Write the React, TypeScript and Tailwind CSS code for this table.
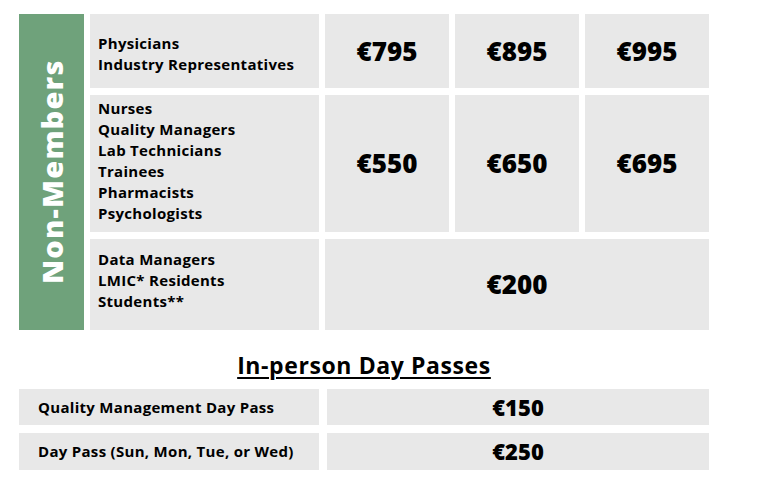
import React from "react";

const font = { fontFamily: '"Open Sans", "Liberation Sans", sans-serif' };

function Label({ lines, cls }: { lines: string[]; cls: string }) {
  return (
    <div
      className={
        "bg-[#e8e8e8] flex flex-col justify-center pl-[8px] text-[15px] leading-[21px] tracking-[0.3px] font-bold text-black " +
        cls
      }
    >
      {lines.map((l) => (
        <div key={l}>{l}</div>
      ))}
    </div>
  );
}

function Price({ v, span }: { v: string; span?: boolean }) {
  return (
    <div
      className={
        "bg-[#e8e8e8] flex items-center justify-center text-[26px] font-extrabold text-black tracking-[0px] " +
        (span ? "col-span-3" : "")
      }
    >
      {v}
    </div>
  );
}

export default function App() {
  return (
    <div className="w-[780px] h-[500px] bg-white pt-[14px] pl-[19px]" style={font}>
      <div className="w-[690px]">
        <div className="grid grid-cols-[65px_229px_124px_124px_124px] grid-rows-[74px_137px_91px] gap-x-[6px] gap-y-[7px]">
          <div className="row-span-3 bg-[#6fa27b] flex items-center justify-center overflow-hidden">
            <div className="-rotate-90 whitespace-nowrap text-white font-extrabold text-[29px] tracking-[1.2px]">
              Non-Members
            </div>
          </div>
          <Label cls="pt-[6px]" lines={["Physicians", "Industry Representatives"]} />
          <Price v="€795" />
          <Price v="€895" />
          <Price v="€995" />
          <Label
            cls="pb-[6px]"
            lines={[
              "Nurses",
              "Quality Managers",
              "Lab Technicians",
              "Trainees",
              "Pharmacists",
              "Psychologists",
            ]}
          />
          <Price v="€550" />
          <Price v="€650" />
          <Price v="€695" />
          <Label cls="pb-[8px]" lines={["Data Managers", "LMIC* Residents", "Students**"]} />
          <Price v="€200" span />
        </div>

        <div className="mt-[20px] h-[30px] flex justify-center">
          <span className="text-[23px] leading-[30px] font-bold text-black underline underline-offset-[3px] decoration-[2px] tracking-[0.6px]">
            In-person Day Passes
          </span>
        </div>

        <div className="mt-[9px] grid grid-cols-[300px_382px] grid-rows-[36px_37px] gap-x-[8px] gap-y-[8px]">
          <div className="bg-[#e8e8e8] flex items-center pl-[19px] text-[15px] tracking-[0.3px] font-bold text-black">
            Quality Management Day Pass
          </div>
          <div className="bg-[#e8e8e8] flex items-center justify-center text-[22px] font-extrabold text-black">
            €150
          </div>
          <div className="bg-[#e8e8e8] flex items-center pl-[19px] text-[15px] tracking-[0.3px] font-bold text-black">
            Day Pass (Sun, Mon, Tue, or Wed)
          </div>
          <div className="bg-[#e8e8e8] flex items-center justify-center text-[22px] font-extrabold text-black">
            €250
          </div>
        </div>
      </div>
    </div>
  );
}
